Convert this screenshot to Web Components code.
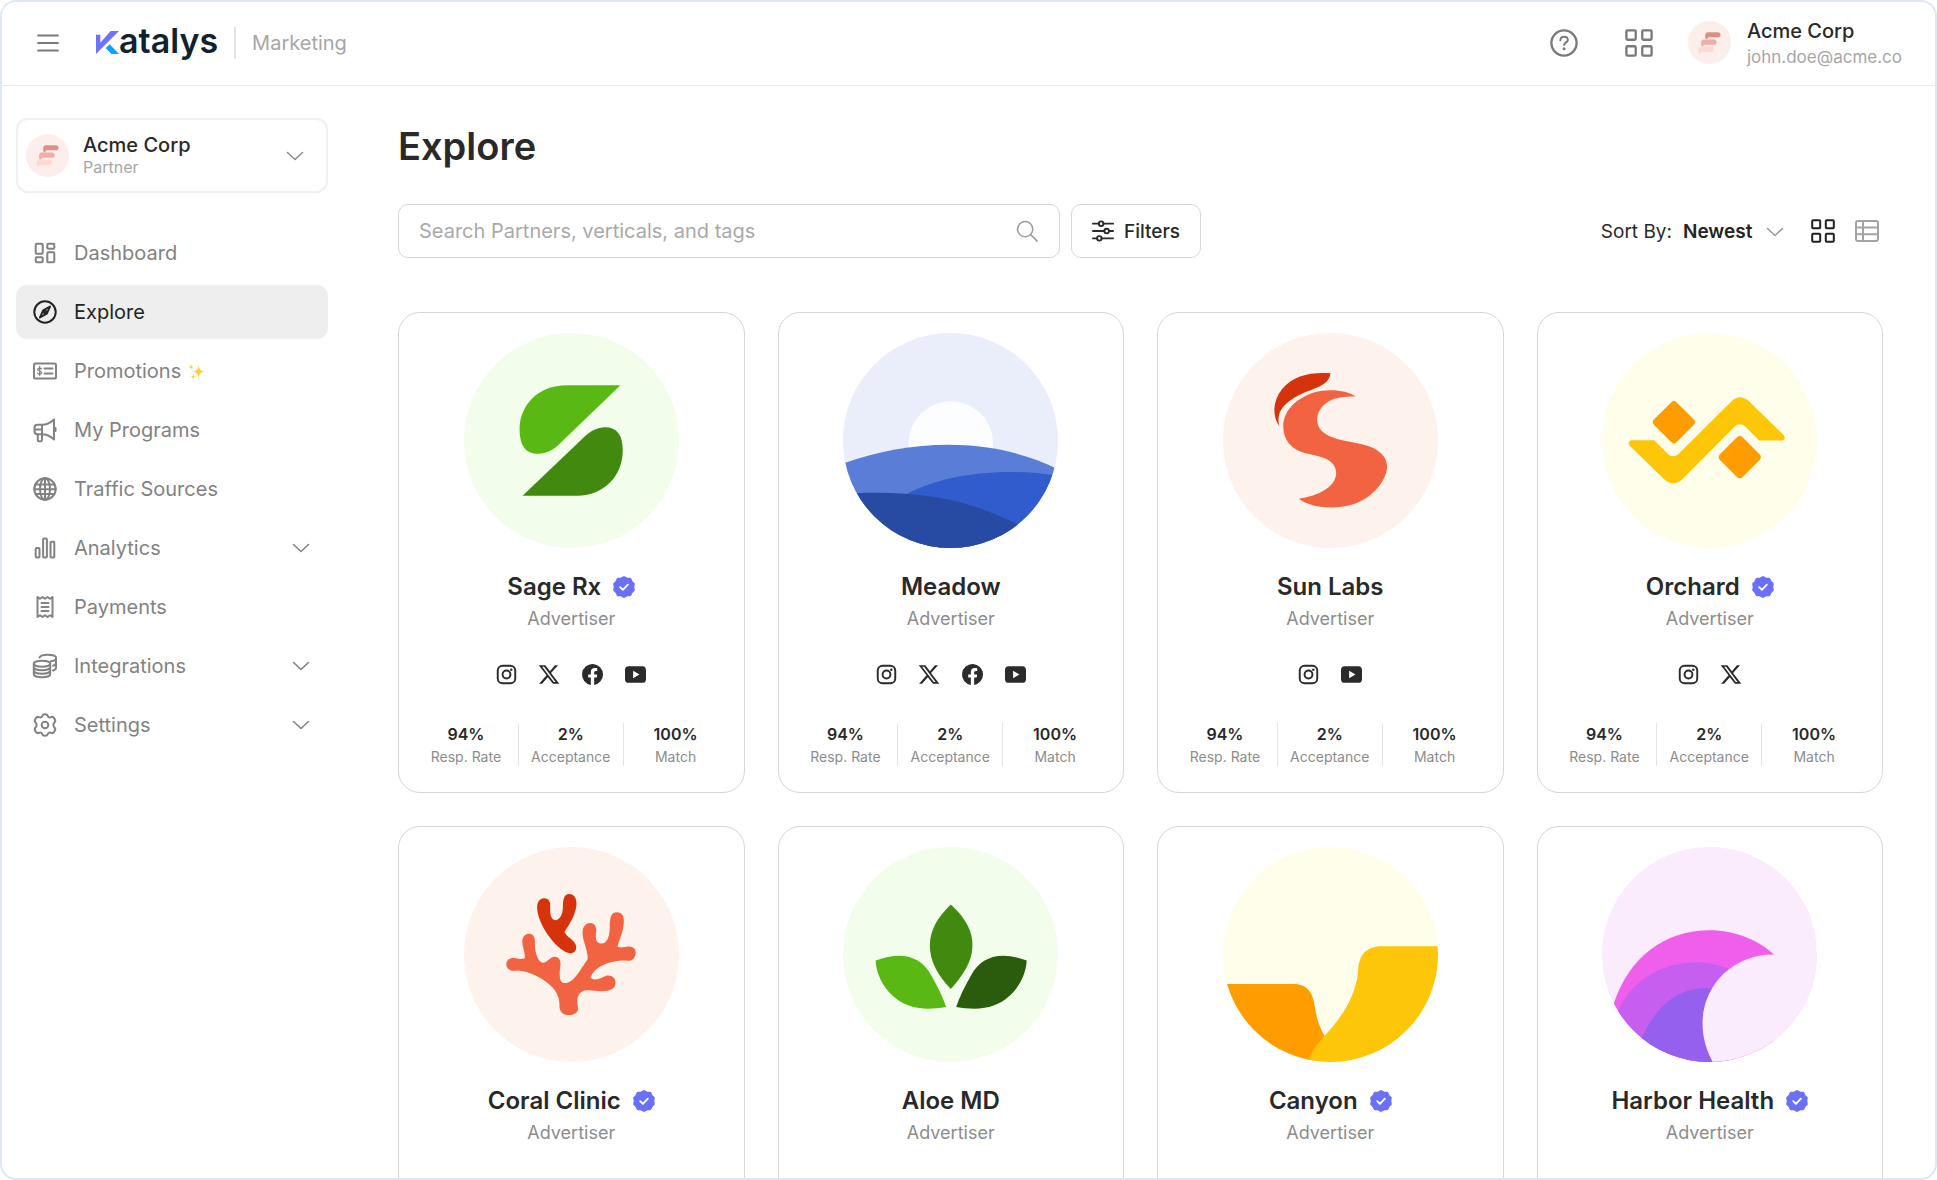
<!DOCTYPE html>
<html lang="en">

<head>
    <meta charset="UTF-8">
    <meta name="viewport" content="width=device-width, initial-scale=1.0">
    <title>Katalys Marketing - Explore</title>
    <style>
        body {
            margin: 0;
            background: #fff;
            color: #292929;
            font-family: Inter, "Liberation Sans", sans-serif;
            font-size: 19px;
        }
    </style>
</head>

<body>
    <app-shell>
        <app-header slot="header" product="Marketing" user="Acme Corp" email="john.doe@acme.co"></app-header>

        <side-bar slot="sidebar">
            <account-switcher slot="account" name="Acme Corp" role-name="Partner"></account-switcher>
            <nav-item icon="dashboard">Dashboard</nav-item>
            <nav-item icon="compass" active>Explore</nav-item>
            <nav-item icon="promo" sparkle>Promotions</nav-item>
            <nav-item icon="megaphone">My Programs</nav-item>
            <nav-item icon="globe">Traffic Sources</nav-item>
            <nav-item icon="bars" expandable>Analytics</nav-item>
            <nav-item icon="receipt">Payments</nav-item>
            <nav-item icon="coins" expandable>Integrations</nav-item>
            <nav-item icon="gear" expandable>Settings</nav-item>
        </side-bar>

        <explore-page heading="Explore">
            <explore-toolbar slot="toolbar"></explore-toolbar>
            <partner-card art="sage" verified social="instagram x facebook youtube" rate="94%" acceptance="2%" match="100%">Sage Rx</partner-card>
            <partner-card art="meadow" social="instagram x facebook youtube" rate="94%" acceptance="2%" match="100%">Meadow</partner-card>
            <partner-card art="sun" social="instagram youtube" rate="94%" acceptance="2%" match="100%">Sun Labs</partner-card>
            <partner-card art="orchard" verified social="instagram x" rate="94%" acceptance="2%" match="100%">Orchard</partner-card>
            <partner-card art="coral" verified>Coral Clinic</partner-card>
            <partner-card art="aloe">Aloe MD</partner-card>
            <partner-card art="canyon" verified>Canyon</partner-card>
            <partner-card art="harbor" verified>Harbor Health</partner-card>
        </explore-page>
    </app-shell>

    <script>
        // all icons are drawn on a 24 grid
        const icons = {
            menu: '<path d="M0 3h24M0 12h24M0 21h24" stroke-width="2.2"/>',
            help: '<circle cx="12" cy="12" r="10.8"/><path d="M8.900 9.700c0-1.900 1.400-3.100 3.200-3.100s3.200 1.100 3.200 2.800c0 2-3.200 2.200-3.200 4.400" stroke-width="1.700"/><circle cx="12.100" cy="17" r="1.300" fill="currentColor" stroke="none"/>',
            grid: '<rect x="1.200" y="1.200" width="8" height="8" rx="1"/><rect x="14.800" y="1.200" width="8" height="8" rx="1"/><rect x="1.200" y="14.800" width="8" height="8" rx="1"/><rect x="14.800" y="14.800" width="8" height="8" rx="1"/>',
            table: '<rect x="1" y="2" width="22" height="20" rx="2"/><path d="M1 8.600h22M1 15.300h22M8 2v20"/>',
            chevron: '<path d="M4.500 8.500l7.500 7 7.500-7" stroke-width="1.600"/>',
            search: '<circle cx="10" cy="10" r="8.300" stroke-width="1.700"/><path d="M16 16l7 7" stroke-width="1.700"/>',
            sliders: '<path d="M1 4h6.500M12.500 4H23M1 12h12.500M18.500 12H23M1 20h4.500M10.500 20H23"/><circle cx="10" cy="4" r="2.500"/><circle cx="16" cy="12" r="2.500"/><circle cx="8" cy="20" r="2.500"/>',
            dashboard: '<rect x="2.700" y="2.700" width="7" height="10" rx="1"/><rect x="14.300" y="2.700" width="7" height="5" rx="1"/><rect x="2.700" y="16.300" width="7" height="5" rx="1"/><rect x="14.300" y="11.300" width="7" height="10" rx="1"/>',
            compass: '<circle cx="12" cy="12" r="10.700"/><path d="M17 6.600l-3.200 7-6.800 3.800 3.200-7z"/><circle cx="12" cy="12" r="1.300"/>',
            promo: '<rect x="1" y="4.500" width="22" height="15" rx="1.500"/><path d="M11.500 9.500h8M11.500 14.500h8"/><path d="M8.600 9.800C8 8.900 4.800 8.700 4.800 10.500s3.900 1.200 3.900 3-3.200 1.900-4.200.8M6.700 7.500v9" stroke-width="1.300"/>',
            megaphone: '<path d="M9 6.800c4.500 0 8-1.600 12-5.300v20c-4-3.600-7.500-5.200-12-5.200H4.500a3 3 0 0 1-3-3V9.800a3 3 0 0 1 3-3zM9 6.800v9.500M4.800 16.300V22a1.200 1.200 0 0 0 1.200 1.200h2A1.200 1.200 0 0 0 9 22v-5.700M1.500 11.500H9M22.500 10v3"/>',
            globe: '<circle cx="12" cy="12" r="10.700"/><ellipse cx="12" cy="12" rx="5" ry="10.700"/><path d="M12 1.300v21.400M2.800 7.500h18.400M1.300 12.300h21.400M2.800 17h18.400"/>',
            bars: '<rect x="2.700" y="12" width="3.800" height="9.500" rx="1"/><rect x="10.100" y="2.500" width="3.800" height="19" rx="1"/><rect x="17.500" y="5.800" width="3.800" height="15.700" rx="1"/>',
            receipt: '<path d="M4.500 2l2.500 1.800L9.500 2 12 3.800 14.500 2 17 3.800 19.500 2v20L17 20.200 14.500 22 12 20.200 9.500 22 7 20.200 4.500 22z"/><path d="M8.500 8h7M8.500 12h7M8.500 16h7"/>',
            coins: '<ellipse cx="9" cy="9.800" rx="8.200" ry="3"/><path d="M.8 9.800v10.500c0 1.700 3.700 3 8.200 3s8.200-1.300 8.200-3V9.800M.8 13.300c0 1.700 3.700 3 8.200 3s8.200-1.300 8.200-3M.8 16.800c0 1.700 3.700 3 8.200 3s8.200-1.300 8.200-3M6.500 3.500C7.500 1.800 11 .8 14.800.8c4.500 0 8.200 1.300 8.200 3v10c0 1.200-1.200 2.200-3 2.700M23 4.500c0 1.300-2.200 2.400-5.200 2.800M23 9c0 1.200-1.200 2.200-3 2.700"/>',
            gear: '<circle cx="12" cy="12" r="3.300"/><path d="M12 1.200c1.300 0 2.400.3 2.700 1.500.4 1.600 1.900 2.200 3.300 1.500 1.600-.8 2.900.3 3.700 1.800.8 1.500.9 2.600-.3 3.600-1.300 1.100-1.300 3.700 0 4.800 1.200 1 1.100 2.100.3 3.600-.8 1.500-2.100 2.600-3.700 1.800-1.400-.7-2.900-.1-3.300 1.500-.3 1.200-1.400 1.500-2.700 1.500s-2.400-.3-2.700-1.500c-.4-1.600-1.900-2.200-3.300-1.500-1.600.8-2.900-.3-3.700-1.800-.8-1.500-.9-2.600.3-3.600 1.300-1.100 1.300-3.700 0-4.800-1.200-1-1.100-2.100-.3-3.600.8-1.500 2.100-2.600 3.700-1.800 1.400.7 2.900.1 3.300-1.500.3-1.200 1.400-1.500 2.700-1.500z"/>',
            sparkle: '<g fill="#ffd034" stroke="none"><path d="M15 3c1 6.200 2.800 8 9 9-6.200 1-8 2.800-9 9-1-6.200-2.800-8-9-9 6.200-1 8-2.800 9-9z"/><path d="M4.500 1.500c.4 3 1.200 3.800 4 4.300-2.800.5-3.600 1.300-4 4.200-.4-2.900-1.200-3.700-4-4.200 2.800-.5 3.600-1.300 4-4.300zM7.500 15c.4 3 1.200 3.800 4 4.300-2.800.5-3.600 1.300-4 4.200-.4-2.900-1.200-3.700-4-4.200 2.800-.5 3.600-1.300 4-4.300z"/></g>',
            verified: '<path fill="#6b70f8" stroke="#6b70f8" stroke-width="3" d="M12 1.700l3 1.600 3.500.2 1.500 3 2.300 2.200-.6 3.300.6 3.300-2.300 2.200-1.500 3-3.500.2-3 1.600-3-1.600-3.500-.2-1.500-3-2.300-2.200.6-3.300-.6-3.300L4 6.500l1.500-3 3.500-.2z"/><path d="M7.800 12.200l3 2.900 5.400-5.600" stroke="#fff" stroke-width="2"/>',
            instagram: '<rect x="2" y="2" width="20" height="20" rx="5.500" stroke-width="2.200"/><circle cx="12" cy="12" r="4.500" stroke-width="2.200"/><circle cx="17.500" cy="6.500" r="1.400" fill="currentColor" stroke="none"/>',
            x: '<path fill="currentColor" stroke="none" d="M18.200 1.300h3.600l-8 9.100L23.200 22.700h-7.300l-5.800-7.500-6.600 7.500H.1l8.500-9.800L-.3 1.300h7.600l5.200 6.900zm-1.300 19.300h2L5.800 3.200H3.600z"/>',
            facebook: '<path fill="currentColor" stroke="none" d="M24 12A12 12 0 1 0 10.100 23.900v-8.400H7.100V12h3V9.400c0-3 1.800-4.700 4.600-4.700 1.300 0 2.700.2 2.700.2v3h-1.500c-1.500 0-2 .9-2 1.900V12h3.400l-.5 3.500h-2.900v8.400A12 12 0 0 0 24 12z"/>',
            youtube: '<path fill="currentColor" stroke="none" fill-rule="evenodd" d="M4 2.500h16c3 0 4 2 4 4.500v10c0 3-1.500 4.500-4 4.500H4c-3 0-4-2-4-4.500V7c0-3 1.500-4.500 4-4.500zM9.300 7.700v8.600l7.200-4.300z"/>'
        };

        // logo drawings, each fills a round picture
        const art = {
            sage: ['220 101 646 646', '#f2fdeb', '<path fill="#5ab815" d="M690 258H530C440 258 387 320 387 390c0 50 18 74 55 74 28 0 48-14 63-28z"/><path fill="#418a0f" d="M396 590L585 410c15-14 37-26 58-26 37 0 54 24 54 71 0 75-57 135-137 135z"/>'],
            meadow: ['219 101 646 646', '#e9eefa', '<circle cx="543" cy="433" r="127" fill="#fbfdff"/><path fill="#5a7ed8" d="M200 500C420 418 670 408 880 518V760H200z"/><path fill="#315ccd" d="M415 582C520 530 680 500 880 532V760H415z"/><path fill="#274ba2" d="M200 584C430 572 570 590 742 675L850 740V760H200z"/>'],
            sun: ['217 101 646 646', '#fef2ec', '<path fill="#d5330b" d="M540 222C480 218 430 228 394 270C365 308 365 350 387 383C378 345 388 320 440 290C490 265 535 262 540 222z"/><path fill="#f26341" d="M615 292C590 272 530 268 490 280C430 300 398 340 398 382C398 420 420 452 465 462C510 471 557 480 557 522C557 565 500 592 445 599C480 628 560 632 610 615C670 595 710 540 710 502C710 460 665 440 620 432C560 422 500 410 500 362C500 325 535 287 615 292z"/>'],
            orchard: ['216 101 646 646', '#fffeeb', '<g fill="#ff9d00"><rect x="384" y="321" width="96" height="96" rx="12" transform="rotate(45 432 369)"/><rect x="582" y="426" width="96" height="96" rx="12" transform="rotate(45 630 474)"/></g><path fill="#fdc609" d="M303 423H373L415 465Q430 478 445 465L603 308Q631 280 660 308L762 408Q770 420 758 424H688L646 382Q630 368 615 382L458 540Q430 566 402 540L298 438Q292 428 303 423z"/>'],
            coral: ['3 2 646 646', '#fef2ec', '<path fill="#d5330b" d="M223 190C221 168 230 156 244 156C258 156 264 168 262 184C261 205 265 221 277 222C291 221 299 205 300 186C300 160 303 143 319 143C334 143 342 156 341 176C337 210 318 236 305 257C309 272 337 282 340 300C341 314 334 321 322 321C290 320 228 245 223 190z"/><path fill="#f26341" d="M130 355C131 338 145 333 158 336C168 339 182 340 186 335C187 318 177 300 178 284C180 269 190 262 200 263C214 265 217 278 216 290C215 310 222 346 240 350C255 350 260 332 275 332C288 332 294 343 293 357C290 375 286 411 305 411C335 411 354 366 374 340C378 318 358 282 359 258C360 240 370 230 382 230C396 230 402 242 400 257C397 278 401 293 416 292C437 291 442 262 441 235C442 211 446 198 463 198C480 199 485 213 483 230C482 258 468 282 464 302C475 307 485 300 502 301C515 303 521 312 518 325C515 339 507 345 495 344C462 340 398 353 383 395C400 408 418 393 430 389C447 385 459 396 458 410C458 426 446 432 432 434C405 438 382 429 363 434C344 441 341 460 345 480C349 498 337 507 319 507C299 507 289 495 290 477C290 444 272 421 240 400C216 386 187 373 162 373C146 377 132 371 130 355z"/>'],
            aloe: ['0 0 646 646', '#f2fdeb', '<path fill="#418a0f" d="M324 173C370 215 389 255 389 295C389 345 360 385 324 427C285 385 261 345 261 295C261 250 285 210 324 173z"/><path fill="#5ab815" d="M98 341C180 310 235 330 265 385C285 420 300 450 310 481C240 492 190 485 150 448C118 418 100 380 98 341z"/><path fill="#2b5b0c" d="M552 341C470 310 415 330 385 385C365 420 350 450 340 481C410 492 460 485 500 448C532 418 550 380 552 341z"/>'],
            canyon: ['0 0 646 646', '#fffeeb', '<path fill="#ff9d00" d="M0 412H213C255 412 270 440 276 480C280 515 292 545 305 567L255 660H0z"/><path fill="#fdc609" d="M660 298H476C430 298 408 325 406 370C402 440 360 510 305 567C285 590 265 614 248 660H660z"/>'],
            harbor: ['0 0 646 646', '#faebfd', '<path fill="#f05feb" d="M35 472C80 330 190 250 323 250C400 250 470 280 517 323V660H0z"/><path fill="#c65ff0" d="M48 492C90 395 190 346 280 346C320 346 355 353 400 375V660H0z"/><path fill="#9660ef" d="M121 572C160 480 230 424 315 424L360 430V660H60z"/><path fill="#faebfd" d="M520 323C390 320 302 420 302 530C302 575 315 615 340 660H660V323z"/>'],
            acme: ['0 0 646 646', '#fbeeeb', '<g stroke-linecap="round" stroke-width="78" fill="none"><path stroke="#dc9085" d="M300 207H450"/><path stroke="#f0aea6" d="M238 318H390"/><path stroke="#ffd8d3" d="M195 425H350"/></g><path fill="#dc9085" d="M261 207h70l-44 62q-26 12-26-12z"/><path fill="#f0aea6" d="M199 318h70l-44 62q-26 12-26-12z"/><path fill="#ffd8d3" d="M156 425h70l-44 62q-26 12-26-12z"/>']
        };

        class BaseElement extends HTMLElement {
            connectedCallback() {
                if (this.shadowRoot) return;
                const template = document.createElement('template');
                template.innerHTML = this.render();
                this.attachShadow({ mode: 'open' }).appendChild(template.content.cloneNode(true));
            }
            attr(name) {
                return this.getAttribute(name) || '';
            }
        }

        class UiIcon extends BaseElement {
            render() {
                return `
                <style>
                    :host { display: inline-flex; flex: none; width: 24px; height: 24px; }
                    svg { width: 100%; height: 100%; overflow: visible; }
                </style>
                <svg viewBox="0 0 24 24" fill="none" stroke="currentColor" stroke-width="2" stroke-linecap="round" stroke-linejoin="round" aria-hidden="true">${icons[this.attr('name')]}</svg>`;
            }
        }

        class RoundArt extends BaseElement {
            render() {
                const [box, bg, shapes] = art[this.attr('name')];
                return `
                <style>
                    :host { display: block; flex: none; width: 43px; aspect-ratio: 1; border-radius: 50%; overflow: hidden; background: ${bg}; }
                    svg { display: block; width: 100%; height: 100%; }
                </style>
                <svg viewBox="${box}" aria-hidden="true">${shapes}</svg>`;
            }
        }

        class AppShell extends BaseElement {
            render() {
                return `
                <style>
                    :host { display: flex; flex-direction: column; box-sizing: border-box; height: 100vh; overflow: hidden; border: 2px solid #dfe8f2; border-radius: 16px; }
                    .body { display: flex; flex: 1; min-height: 0; }
                    ::slotted([slot=sidebar]) { flex: none; width: 312px; }
                    main { flex: 1; min-width: 0; }
                </style>
                <slot name="header"></slot>
                <div class="body">
                    <slot name="sidebar"></slot>
                    <main><slot></slot></main>
                </div>`;
            }
        }

        class AppHeader extends BaseElement {
            render() {
                return `
                <style>
                    :host { display: block; flex: none; }
                    header { display: flex; align-items: center; box-sizing: border-box; height: 84px; padding: 0 33px 2px 34px; border-bottom: 1px solid #e9e9e9; }
                    button { display: flex; padding: 0; border: 0; background: none; color: #7a7a7a; font: inherit; cursor: pointer; }
                    .menu ui-icon { height: 20px; }
                    .logo { display: flex; align-items: center; margin-left: 36px; color: #10222f; text-decoration: none; font: 600 34px/40px Inter, sans-serif; }
                    .logo svg { width: 23px; height: 23px; }
                    .logo span { margin-top: -4px; }
                    .product { margin-left: 16px; padding-left: 16px; border-left: 2px solid #e4e4e4; color: #a6a6a6; font-size: 20px; line-height: 32px; }
                    .right { display: flex; align-items: center; margin-left: auto; }
                    .help ui-icon, .apps ui-icon { width: 28px; height: 28px; }
                    .apps { margin: 0 35px 0 47px; }
                    .user { gap: 16px; align-items: center; text-align: left; }
                    .user span { display: grid; gap: 2px; padding-top: 2px; }
                    .name { color: #292929; font-weight: 500; font-size: 20px; line-height: 24px; }
                    .email { color: #a6a6a6; font-size: 17px; line-height: 24px; }
                </style>
                <header>
                    <button class="menu" aria-label="Menu"><ui-icon name="menu"></ui-icon></button>
                    <a class="logo" href="#" aria-label="Katalys">
                        <svg viewBox="288 85 69 69" aria-hidden="true"><path fill="#6d72f8" d="M288 96h13v24l31-35h25l-69 69z"/><path fill="#09a3ff" d="M317 136l12-11 28 29h-23z"/></svg>
                        <span>atalys</span>
                    </a>
                    <span class="product">${this.attr('product')}</span>
                    <div class="right">
                        <button class="help" aria-label="Help"><ui-icon name="help"></ui-icon></button>
                        <button class="apps" aria-label="Apps"><ui-icon name="grid"></ui-icon></button>
                        <button class="user">
                            <round-art name="acme"></round-art>
                            <span><b class="name">${this.attr('user')}</b><small class="email">${this.attr('email')}</small></span>
                        </button>
                    </div>
                </header>`;
            }
        }

        class SideBar extends BaseElement {
            render() {
                return `
                <style>
                    :host { display: block; padding: 32px 0 0 14px; }
                    nav { display: grid; gap: 5px; margin-top: 33px; }
                </style>
                <slot name="account"></slot>
                <nav><slot></slot></nav>`;
            }
        }

        class AccountSwitcher extends BaseElement {
            render() {
                return `
                <style>
                    :host { display: block; }
                    button { display: flex; align-items: center; box-sizing: border-box; width: 100%; height: 75px; padding: 0 19px 0 8px; border: 2px solid #f0f0f0; border-radius: 12px; background: #fff; color: #292929; font: inherit; text-align: left; cursor: pointer; }
                    .text { display: grid; flex: 1; margin-left: 14px; }
                    b { font-weight: 500; font-size: 20px; line-height: 24px; }
                    small { color: #a6a6a6; font-size: 16px; line-height: 21px; }
                    .chev { color: #8f8f8f; }
                </style>
                <button>
                    <round-art name="acme"></round-art>
                    <span class="text"><b>${this.attr('name')}</b><small>${this.attr('role-name')}</small></span>
                    <ui-icon class="chev" name="chevron"></ui-icon>
                </button>`;
            }
        }

        class NavItem extends BaseElement {
            render() {
                const chev = this.hasAttribute('expandable') ? '<ui-icon class="chev" name="chevron"></ui-icon>' : '';
                const sparkle = this.hasAttribute('sparkle') ? '<ui-icon class="sparkle" name="sparkle"></ui-icon>' : '';
                return `
                <style>
                    :host { display: block; }
                    a { display: flex; align-items: center; box-sizing: border-box; height: 54px; padding: 0 15px 0 17px; border-radius: 11px; color: #828282; font-size: 20px; line-height: 28px; text-decoration: none; }
                    :host([active]) a { background: #eee; color: #242424; }
                    .text { margin-left: 17px; }
                    .sparkle { width: 17px; height: 17px; margin-left: 7px; }
                    .chev { margin-left: auto; }
                </style>
                <a href="#"><ui-icon name="${this.attr('icon')}"></ui-icon><span class="text"><slot></slot></span>${sparkle}${chev}</a>`;
            }
        }

        class ExplorePage extends BaseElement {
            render() {
                return `
                <style>
                    :host { display: block; padding: 36px 52px 0 70px; }
                    h1 { margin: 0 0 34px; font-size: 38px; line-height: 48px; font-weight: 600; }
                    .cards { display: grid; grid-template-columns: repeat(4, minmax(0, 1fr)); grid-auto-rows: 1fr; gap: 33px; margin-top: 54px; }
                </style>
                <h1>${this.attr('heading')}</h1>
                <slot name="toolbar"></slot>
                <div class="cards"><slot></slot></div>`;
            }
        }

        class ExploreToolbar extends BaseElement {
            render() {
                return `
                <style>
                    :host { display: flex; align-items: center; gap: 11px; }
                    .search { display: flex; align-items: center; flex: 0 1 662px; box-sizing: border-box; height: 54px; padding: 0 21px 0 20px; border: 1px solid #d6d6d6; border-radius: 10px; color: #9d9d9d; }
                    input { flex: 1; min-width: 0; padding: 0; border: 0; outline: 0; background: none; color: #292929; font: inherit; font-size: 20px; }
                    input::placeholder { color: #a9a9a9; opacity: 1; }
                    .search ui-icon { width: 22px; height: 22px; }
                    button { display: flex; align-items: center; padding: 0; border: 0; background: none; color: #292929; font: inherit; cursor: pointer; }
                    .filters { box-sizing: border-box; height: 54px; gap: 10px; padding: 0 20px; border: 1px solid #d6d6d6; border-radius: 10px; font-weight: 500; }
                    .filters ui-icon { width: 22px; height: 22px; }
                    .sort { display: flex; align-items: center; margin-left: auto; }
                    .pick { position: relative; display: flex; margin: 0 24px 0 11px; }
                    select { appearance: none; padding: 0 34px 0 0; border: 0; background: none; color: #242424; font: inherit; font-weight: 600; cursor: pointer; }
                    .pick ui-icon { position: absolute; right: 0; top: 0; color: #999; pointer-events: none; }
                    .on { color: #1f1f1f; }
                    .off { margin: 0 4px 0 20px; color: #a3a3a3; }
                </style>
                <div class="search">
                    <input type="search" aria-label="Search" placeholder="Search Partners, verticals, and tags">
                    <ui-icon name="search"></ui-icon>
                </div>
                <button class="filters"><ui-icon name="sliders"></ui-icon>Filters</button>
                <div class="sort">
                    <label for="sort">Sort By:</label>
                    <span class="pick">
                        <select id="sort"><option>Newest</option></select>
                        <ui-icon name="chevron"></ui-icon>
                    </span>
                    <button class="on" aria-label="Grid view"><ui-icon name="grid"></ui-icon></button>
                    <button class="off" aria-label="Table view"><ui-icon name="table"></ui-icon></button>
                </div>`;
            }
        }

        class PartnerCard extends BaseElement {
            render() {
                const badge = this.hasAttribute('verified') ? '<ui-icon class="badge" name="verified"></ui-icon>' : '';
                const social = this.attr('social').split(' ').filter(Boolean)
                    .map(name => `<a href="#" aria-label="${name}"><ui-icon name="${name}"></ui-icon></a>`).join('');
                const stats = !this.hasAttribute('rate') ? '' : `
                    <dl>
                        <div><dd>${this.attr('rate')}</dd><dt>Resp. Rate</dt></div>
                        <div><dd>${this.attr('acceptance')}</dd><dt>Acceptance</dt></div>
                        <div><dd>${this.attr('match')}</dd><dt>Match</dt></div>
                    </dl>`;
                return `
                <style>
                    :host { display: block; }
                    article { display: flex; flex-direction: column; align-items: center; box-sizing: border-box; height: 100%; padding: 20px 15px 26px; border: 1px solid #d6d6d6; border-radius: 22px; }
                    round-art { width: 215px; }
                    .name { display: flex; align-items: center; gap: 12px; margin-top: 22px; }
                    h2 { margin: 0; font-size: 24px; line-height: 34px; font-weight: 600; }
                    .badge { width: 22px; height: 22px; }
                    p { margin: 2px 0 0; color: #8c8c8c; font-size: 18px; line-height: 26px; }
                    .social { display: flex; gap: 22px; margin-top: 32px; }
                    .social a { display: flex; color: #2b2b2b; }
                    .social ui-icon { width: 21px; height: 21px; }
                    .social:empty { display: none; }
                    dl { display: grid; grid-template-columns: repeat(3, 1fr); width: 100%; margin: 38px 0 0; text-align: center; }
                    dl div { box-sizing: border-box; height: 43px; border-right: 1px solid #e4e4e4; }
                    dl div:last-child { border-right-color: transparent; }
                    dd { margin: 0; font-size: 16px; line-height: 22px; font-weight: 600; }
                    dt { color: #8c8c8c; font-size: 14px; line-height: 23px; }
                </style>
                <article>
                    <round-art name="${this.attr('art')}"></round-art>
                    <div class="name"><h2><slot></slot></h2>${badge}</div>
                    <p>Advertiser</p>
                    <div class="social">${social}</div>
                    ${stats}
                </article>`;
            }
        }

        customElements.define('ui-icon', UiIcon);
        customElements.define('round-art', RoundArt);
        customElements.define('app-shell', AppShell);
        customElements.define('app-header', AppHeader);
        customElements.define('side-bar', SideBar);
        customElements.define('account-switcher', AccountSwitcher);
        customElements.define('nav-item', NavItem);
        customElements.define('explore-page', ExplorePage);
        customElements.define('explore-toolbar', ExploreToolbar);
        customElements.define('partner-card', PartnerCard);
    </script>
</body>

</html>
